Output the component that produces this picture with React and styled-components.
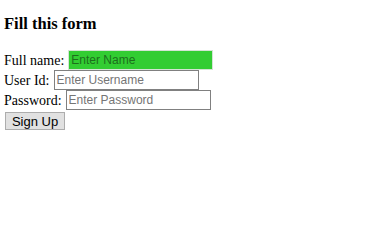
import React from "react";
import styled, { createGlobalStyle } from "styled-components";

const Global = createGlobalStyle`
  html, body { margin: 0; padding: 0; background: #fff; }
  body { font-family: "Liberation Serif", "Times New Roman", serif; color: #000; }
`;

const Page = styled.div`
  padding: 14px 4px 0 4px;
`;

const Heading = styled.h3`
  margin: 0 0 17px 0;
  font-size: 16.5px;
  font-weight: bold;
  line-height: 19px;
`;

const Form = styled.form`
  display: flex;
  flex-direction: column;
  align-items: flex-start;
`;

const Row = styled.div`
  display: flex;
  align-items: center;
  gap: 4px;
  height: 20px;
`;

const Label = styled.label`
  font-size: 14px;
  line-height: 16px;
  padding-top: 1px;
`;

const Field = styled.input`
  box-sizing: border-box;
  width: 145px;
  height: 20px;
  margin: 0;
  padding: 1px 2px;
  font-family: "Liberation Sans", Arial, sans-serif;
  font-size: 12px;
  color: #000;
  caret-color: #000;
  border: 1px solid ${(p) => (p.$active ? "#d4e4d4" : "#808080")};
  background: ${(p) => (p.$active ? "#32cd32" : "#fff")};
  outline: none;
  &::placeholder {
    color: ${(p) => (p.$active ? "#1d6e1d" : "#757575")};
  }
`;

const Button = styled.button`
  box-sizing: border-box;
  margin: 2px 0 0 1px;
  width: 60px;
  height: 18px;
  padding: 0;
  font-family: "Liberation Sans", Arial, sans-serif;
  font-size: 13px;
  color: #000;
  background: #e1e1e1;
  border: 1px solid #adadad;
  border-radius: 0;
`;

export default function App() {
  return (
    <Page>
      <Global />
      <Heading>Fill this form</Heading>
      <Form onSubmit={(e) => e.preventDefault()}>
        <Row>
          <Label>Full name:</Label>
          <Field $active autoFocus type="text" placeholder="Enter Name" />
        </Row>
        <Row>
          <Label>User Id:</Label>
          <Field type="text" placeholder="Enter Username" />
        </Row>
        <Row>
          <Label>Password:</Label>
          <Field type="password" placeholder="Enter Password" />
        </Row>
        <Button type="submit">Sign Up</Button>
      </Form>
    </Page>
  );
}
